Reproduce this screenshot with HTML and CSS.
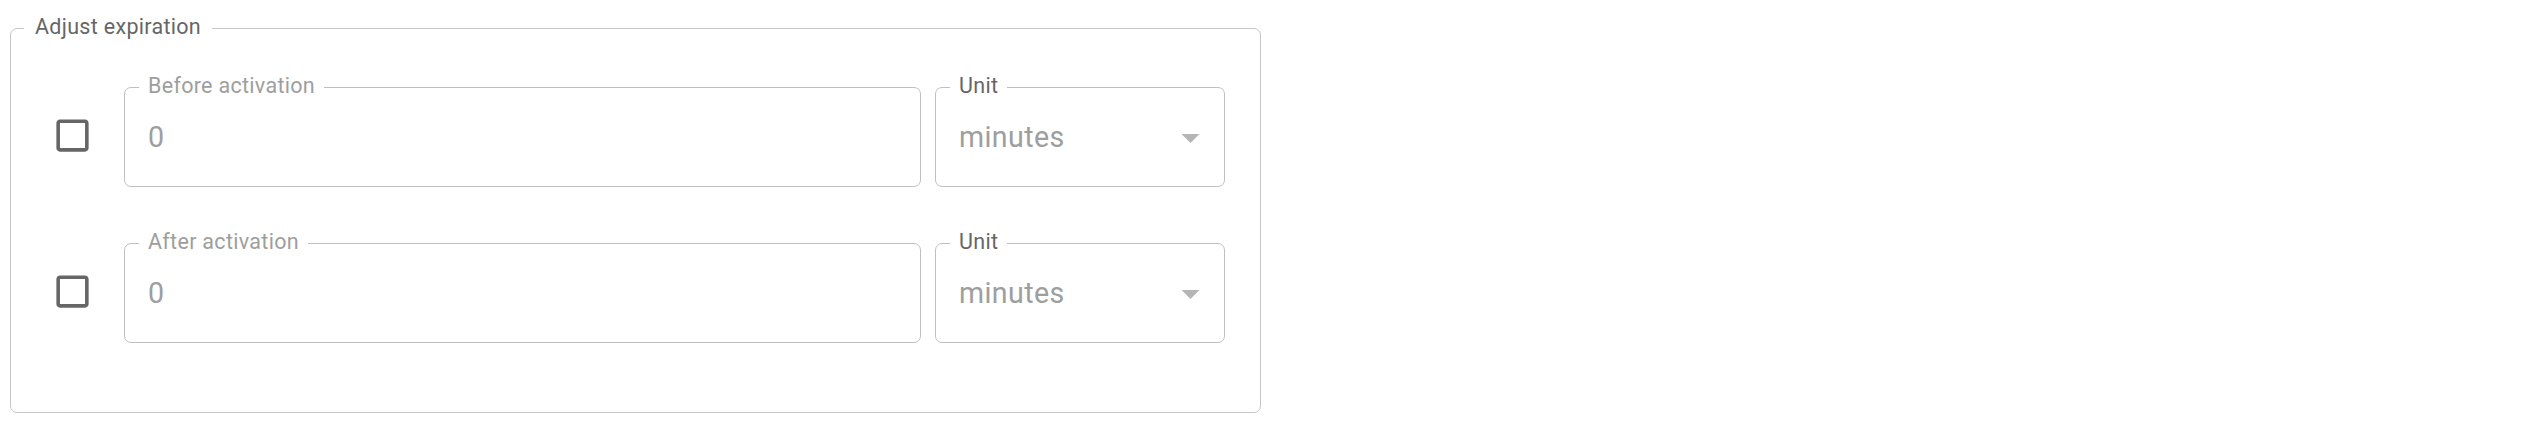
FILE: index.html
```html
<!DOCTYPE html>
<html lang="en">
<head>
<meta charset="utf-8">
<title>Adjust expiration</title>
<link rel="stylesheet" href="styles.css">
</head>
<body>
<fieldset class="group">
  <legend class="group-legend">Adjust expiration</legend>
  <div class="rows">
    <div class="row">
      <span class="checkbox">
        <svg viewBox="0 0 24 24" width="43" height="43"><path d="M19 5v14H5V5h14m0-2H5c-1.11 0-2 .9-2 2v14c0 1.1.89 2 2 2h14c1.1 0 2-.9 2-2V5c0-1.1-.9-2-2-2z"/></svg>
      </span>
      <fieldset class="field field-grow">
        <legend class="field-label disabled">Before activation</legend>
        <div class="field-body"><span class="value">0</span></div>
      </fieldset>
      <fieldset class="field field-unit">
        <legend class="field-label">Unit</legend>
        <div class="field-body"><span class="value">minutes</span>
          <svg class="arrow" viewBox="0 0 24 24" width="43" height="43"><path d="M7 10l5 5 5-5z"/></svg>
        </div>
      </fieldset>
    </div>
    <div class="row">
      <span class="checkbox">
        <svg viewBox="0 0 24 24" width="43" height="43"><path d="M19 5v14H5V5h14m0-2H5c-1.11 0-2 .9-2 2v14c0 1.1.89 2 2 2h14c1.1 0 2-.9 2-2V5c0-1.1-.9-2-2-2z"/></svg>
      </span>
      <fieldset class="field field-grow">
        <legend class="field-label disabled">After activation</legend>
        <div class="field-body"><span class="value">0</span></div>
      </fieldset>
      <fieldset class="field field-unit">
        <legend class="field-label">Unit</legend>
        <div class="field-body"><span class="value">minutes</span>
          <svg class="arrow" viewBox="0 0 24 24" width="43" height="43"><path d="M7 10l5 5 5-5z"/></svg>
        </div>
      </fieldset>
    </div>
  </div>
</fieldset>
</body>
</html>
```

FILE: styles.css
```css
html, body {
  margin: 0;
  padding: 0;
  background: #ffffff;
}

body {
  font-family: Roboto, "Noto Sans", sans-serif;
}

.group {
  box-sizing: border-box;
  margin: 15px 0 0 10px;
  width: 1251px;
  min-width: 0;
  padding: 32px 35px 69px 24px;
  border: 1px solid #c6c6c6;
  border-radius: 7px;
}

.group-legend {
  margin-left: -11px;
  padding: 0 11px 3px;
  font-size: 21.5px;
  line-height: 24px;
  letter-spacing: 0.3px;
  color: #666666;
}

.rows {
  display: flex;
  flex-direction: column;
  gap: 43px;
}

.row {
  display: flex;
  align-items: center;
  gap: 14px;
}

.checkbox {
  display: flex;
  align-items: center;
  justify-content: center;
  width: 75px;
  height: 75px;
  margin-top: 10px;
  flex: none;
}

.checkbox svg {
  fill: #666666;
  display: block;
}

.field {
  box-sizing: border-box;
  margin: 0;
  min-width: 0;
  height: 113px;
  padding: 0 23px;
  border: 1px solid #bfbfbf;
  border-radius: 7px;
}

.field-grow {
  flex: 1;
}

.field-unit {
  flex: none;
  width: 290px;
  padding-right: 12px;
}

.field-label {
  margin-left: -9px;
  padding: 0 9px 3px;
  font-size: 21.5px;
  line-height: 24px;
  letter-spacing: 0.3px;
  color: #666666;
}

.field-label.disabled {
  color: #9e9e9e;
}

.field-body {
  box-sizing: border-box;
  height: 85px;
  padding-bottom: 13px;
  display: flex;
  align-items: center;
  justify-content: space-between;
}

.value {
  font-size: 28.6px;
  line-height: 34px;
  letter-spacing: 0.4px;
  color: #9e9e9e;
}

.arrow {
  display: block;
  fill: #b5b5b5;
  flex: none;
}
```
